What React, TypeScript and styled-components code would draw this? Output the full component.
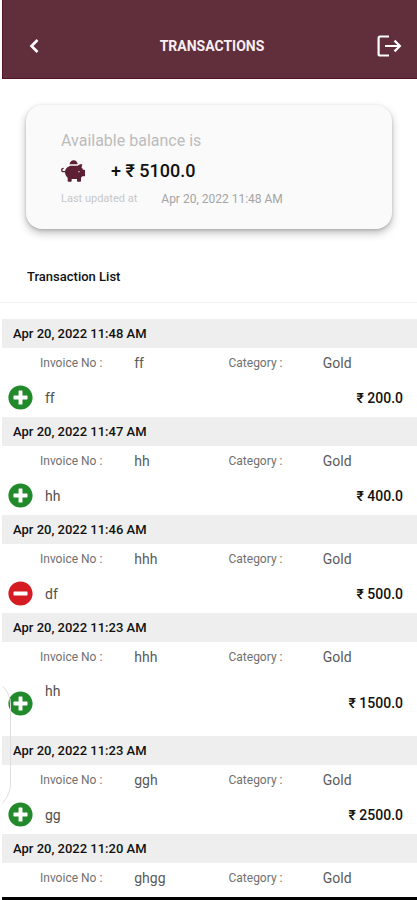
import React from "react";
import styled, { createGlobalStyle } from "styled-components";
import { FaPiggyBank, FaPlusCircle, FaMinusCircle } from "react-icons/fa";

const GlobalStyle = createGlobalStyle`
  * { box-sizing: border-box; }
  body {
    margin: 0;
    background: #fff;
    font-family: Roboto, "Noto Sans", "Liberation Sans", sans-serif;
    color: #111;
  }
`;

const Screen = styled.div`
  position: relative;
  display: flex;
  flex-direction: column;
  min-height: 100vh;
  padding-left: 2px;
`;

const Header = styled.header`
  display: flex;
  align-items: flex-end;
  justify-content: space-between;
  height: 79px;
  padding: 0 14px 18px 18px;
  background: #612e3c;
  border: 1px solid #4f1524;
  border-width: 0 0 1px 1px;
`;

const HeaderTitle = styled.h1`
  margin: 0;
  font-size: 14px;
  line-height: 28px;
  font-weight: 700;
  color: #f8eef0;
`;

const IconButton = styled.button`
  display: flex;
  align-items: center;
  justify-content: center;
  width: 28px;
  height: 28px;
  padding: 0;
  border: 0;
  background: none;
  color: #fff;
`;

const Card = styled.section`
  display: flex;
  flex-direction: column;
  gap: 8px;
  height: 124px;
  margin: 26px 25px 0 24px;
  padding: 26px 36px 0 35px;
  border-radius: 16px;
  background: #fafafa;
  box-shadow: 0 4px 8px rgba(0, 0, 0, 0.26), 0 1px 3px rgba(0, 0, 0, 0.16);
`;

const CardLabel = styled.div`
  font-size: 16px;
  line-height: 20px;
  color: #bcbcbc;
`;

const BalanceRow = styled.div`
  display: flex;
  align-items: center;
  gap: 26px;
  line-height: 24px;
  color: #5c1f33;
`;

const Balance = styled.strong`
  font-size: 18px;
  font-weight: 500;
  color: #111;
`;

const UpdatedRow = styled.div`
  display: flex;
  align-items: center;
  gap: 24px;
  font-size: 12px;
  line-height: 16px;
  color: #a4a4a4;
`;

const UpdatedLabel = styled.span`
  font-size: 11px;
  color: #c8c8c8;
`;

const ListTitle = styled.h2`
  margin: 28px 0 0 -2px;
  padding: 10px 27px 16px;
  border-bottom: 1px solid #efefef;
  font-size: 13px;
  line-height: 19px;
  font-weight: 500;
`;

const List = styled.ul`
  flex: 1;
  margin: 16px 0 0;
  padding: 0;
  list-style: none;
`;

const DateBar = styled.h3`
  margin: 0;
  padding: 0 11px;
  background: #eee;
  font-size: 13px;
  line-height: 29px;
  font-weight: 500;
`;

const Meta = styled.dl`
  display: grid;
  grid-template-columns: 1fr 1fr 1fr 1fr;
  align-items: center;
  height: 30px;
  margin: 0;
  padding-left: 38px;
  line-height: 30px;
`;

const MetaLabel = styled.dt`
  font-size: 12px;
  color: #707070;
`;

const MetaValue = styled.dd`
  margin: 0;
  font-size: 14px;
  color: #5a5a5a;
`;

const Entry = styled.div<{ $tall?: boolean }>`
  display: flex;
  align-items: center;
  gap: 12px;
  height: ${(p) => (p.$tall ? 64 : 39)}px;
  padding: 0 14px 0 6px;
  ${(p) => p.$tall && "padding-bottom: 2px;"}
`;

const Kind = styled.span<{ $credit: boolean }>`
  display: flex;
  color: ${(p) => (p.$credit ? "#238a2b" : "#d51c22")};
`;

const Note = styled.span<{ $tall?: boolean }>`
  flex: 1;
  font-size: 14px;
  line-height: 18px;
  color: #505050;
  ${(p) => p.$tall && "align-self: flex-start; padding-top: 20px; margin-top: -10px;"}
`;

const Amount = styled.strong`
  font-size: 14px;
  font-weight: 500;
`;

const BottomBar = styled.footer`
  height: 3px;
  background: #000;
`;

const EdgeHandle = styled.svg`
  position: absolute;
  left: 0;
  top: 680px;
  pointer-events: none;
`;

type Transaction = {
  date: string;
  invoice: string;
  note?: string;
  amount?: string;
  credit?: boolean;
  tall?: boolean;
};

const transactions: Transaction[] = [
  { date: "Apr 20, 2022 11:48 AM", invoice: "ff", note: "ff", amount: "200.0", credit: true },
  { date: "Apr 20, 2022 11:47 AM", invoice: "hh", note: "hh", amount: "400.0", credit: true },
  { date: "Apr 20, 2022 11:46 AM", invoice: "hhh", note: "df", amount: "500.0", credit: false },
  { date: "Apr 20, 2022 11:23 AM", invoice: "hhh", note: "hh", amount: "1500.0", credit: true, tall: true },
  { date: "Apr 20, 2022 11:23 AM", invoice: "ggh", note: "gg", amount: "2500.0", credit: true },
  { date: "Apr 20, 2022 11:20 AM", invoice: "ghgg" },
];

export default function App() {
  return (
    <Screen>
      <GlobalStyle />
      <Header>
        <IconButton aria-label="Back">
          <svg width="28" height="28" viewBox="0 0 28 28" fill="none" stroke="currentColor" strokeWidth="2.6">
            <path d="M16.5 8 L10.5 14 L16.5 20" />
          </svg>
        </IconButton>
        <HeaderTitle>TRANSACTIONS</HeaderTitle>
        <IconButton aria-label="Log out">
          <svg width="28" height="28" viewBox="0 0 28 28" fill="none" stroke="currentColor" strokeWidth="2.2">
            <path d="M14 4.5 H5 Q3.6 4.5 3.6 6 V22 Q3.6 23.5 5 23.5 H14" />
            <path d="M10 14 H24.5 M19.5 8.6 L24.9 14 L19.5 19.4" />
          </svg>
        </IconButton>
      </Header>

      <Card>
        <CardLabel>Available balance is</CardLabel>
        <BalanceRow>
          <FaPiggyBank size={24} />
          <Balance>+ ₹ 5100.0</Balance>
        </BalanceRow>
        <UpdatedRow>
          <UpdatedLabel>Last updated at</UpdatedLabel>
          <time>Apr 20, 2022 11:48 AM</time>
        </UpdatedRow>
      </Card>

      <ListTitle>Transaction List</ListTitle>

      <List>
        {transactions.map((t, i) => (
          <li key={i}>
            <DateBar>{t.date}</DateBar>
            <Meta>
              <MetaLabel>Invoice No :</MetaLabel>
              <MetaValue>{t.invoice}</MetaValue>
              <MetaLabel>Category :</MetaLabel>
              <MetaValue>Gold</MetaValue>
            </Meta>
            {t.amount && (
              <Entry $tall={t.tall}>
                <Kind $credit={!!t.credit}>
                  {t.credit ? <FaPlusCircle size={25} /> : <FaMinusCircle size={25} />}
                </Kind>
                <Note $tall={t.tall}>{t.note}</Note>
                <Amount>₹ {t.amount}</Amount>
              </Entry>
            )}
          </li>
        ))}
      </List>
      <BottomBar />

      <EdgeHandle width="12" height="130" viewBox="0 0 12 130" fill="none" stroke="#dedede" aria-hidden="true">
        <path d="M2.5 6 Q10.5 14 10.5 24 V104 Q10.5 114 2.5 123" />
      </EdgeHandle>
    </Screen>
  );
}
